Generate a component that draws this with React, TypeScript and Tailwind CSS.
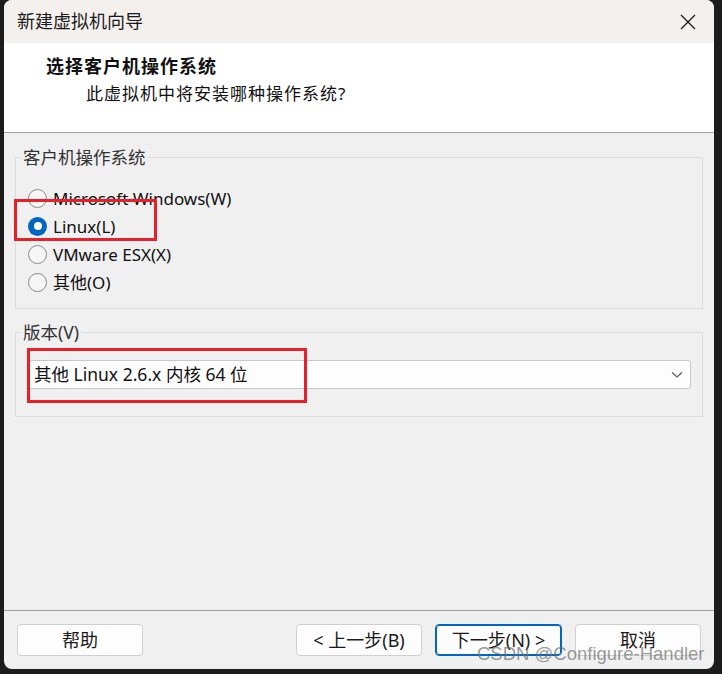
import React from "react";

const cjk = "font-['Noto_Sans','Noto_Sans_CJK_SC',sans-serif]";

const osOptions = [
  { label: "Microsoft Windows(W)", checked: false },
  { label: "Linux(L)", checked: true },
  { label: "VMware ESX(X)", checked: false },
  { label: "其他(O)", checked: false },
];

const Radio = ({ label, checked }: { label: string; checked: boolean }) => (
  <div className="flex h-[28px] items-center gap-[6px]">
    {checked ? (
      <span className="flex h-[19px] w-[19px] items-center justify-center rounded-full bg-[#0067c0]">
        <span className="h-[8px] w-[8px] rounded-full bg-white" />
      </span>
    ) : (
      <span className="h-[19px] w-[19px] rounded-full border border-[#8a8a8a] bg-[#f6f6f6]" />
    )}
    <span className="text-[17px] leading-none text-[#111]">{label}</span>
  </div>
);

const Button = ({
  children,
  primary,
}: {
  children: React.ReactNode;
  primary?: boolean;
}) => (
  <button
    className={
      primary
        ? "flex h-[32px] w-[127px] items-center justify-center rounded-[4px] border border-[#0067c0] bg-[#fdfdfd] text-[18px] text-[#1a1a1a] shadow-[inset_0_0_0_1px_#0067c0]"
        : "flex h-[32px] w-[126px] items-center justify-center rounded-[4px] border border-[#d0d0d0] bg-[#fdfdfd] text-[18px] text-[#1a1a1a]"
    }
  >
    {children}
  </button>
);

export default function App() {
  return (
    <div className={`h-[674px] w-[722px] bg-[#1c1c1c] pl-[4px] ${cjk}`}>
      <div className="relative flex h-[669px] w-[710px] flex-col overflow-hidden rounded-[8px] bg-[#f0f0f0]">
        {/* title bar */}
        <div className="flex h-[43px] shrink-0 items-center justify-between bg-[#f4f0ed] pl-[13px] pr-[16px]">
          <span className="text-[18px] text-[#1a1a1a]">新建虚拟机向导</span>
          <svg width="18" height="18" viewBox="0 0 18 18" className="mr-[1px]">
            <path d="M2 2 L16 16 M16 2 L2 16" stroke="#1a1a1a" strokeWidth="1.3" fill="none" />
          </svg>
        </div>

        {/* header */}
        <div className="h-[90px] shrink-0 border-b border-[#a0a0a0] bg-white">
          <div className="pl-[42px] pt-[12px] text-[18px] font-bold leading-[22px] tracking-[1px] text-[#111]">
            选择客户机操作系统
          </div>
          <div className="pl-[82px] pt-[6px] text-[17px] leading-[22px] tracking-[1px] text-[#111]">
            此虚拟机中将安装哪种操作系统?
          </div>
        </div>

        {/* body */}
        <div className="flex-1 border-b border-[#a0a0a0] px-[11px] pt-[12px]">
          <fieldset className="border border-[#dcdcdc] pb-[12px] pl-[12px] pt-[15px]">
            <legend className="-ml-[7px] px-[2px] text-[17.5px] leading-[24px] text-[#333]">
              客户机操作系统
            </legend>
            {osOptions.map((o) => (
              <Radio key={o.label} label={o.label} checked={o.checked} />
            ))}
          </fieldset>

          <fieldset className="mt-[11px] border border-[#dcdcdc] pb-[27px] pl-[12px] pr-[11px] pt-[16px]">
            <legend className="-ml-[7px] px-[2px] text-[17.5px] leading-[24px] text-[#333]">
              版本(V)
            </legend>
            <div className="flex h-[29px] items-center justify-between rounded-[3px] border border-[#c8c8c8] bg-[#fdfdfd] pl-[5px] pr-[7px]">
              <span className="text-[17.5px] text-[#111]">其他 Linux 2.6.x 内核 64 位</span>
              <svg width="12" height="8" viewBox="0 0 12 8">
                <path d="M1 1.5 L6 6 L11 1.5" stroke="#5a5a5a" strokeWidth="1.2" fill="none" />
              </svg>
            </div>
          </fieldset>
        </div>

        {/* footer */}
        <div className="flex h-[58px] shrink-0 items-start justify-between px-[13px] pt-[13px]">
          <Button>帮助</Button>
          <div className="flex gap-[13px]">
            <Button>&lt; 上一步(B)</Button>
            <Button primary>下一步(N) &gt;</Button>
            <Button>取消</Button>
          </div>
        </div>

        {/* annotation boxes */}
        <div className="absolute left-[10px] top-[199px] h-[42px] w-[143px] border-[3px] border-[#e8202a]" />
        <div className="absolute left-[23px] top-[348px] h-[55px] w-[280px] border-[3px] border-[#e8202a]" />

        {/* watermark */}
        <div className="absolute left-[473px] top-[642px] font-['Liberation_Sans',sans-serif] text-[18.5px] leading-[24px] text-[rgba(110,110,110,0.7)]">
          CSDN @Configure-Handler
        </div>
      </div>
    </div>
  );
}
